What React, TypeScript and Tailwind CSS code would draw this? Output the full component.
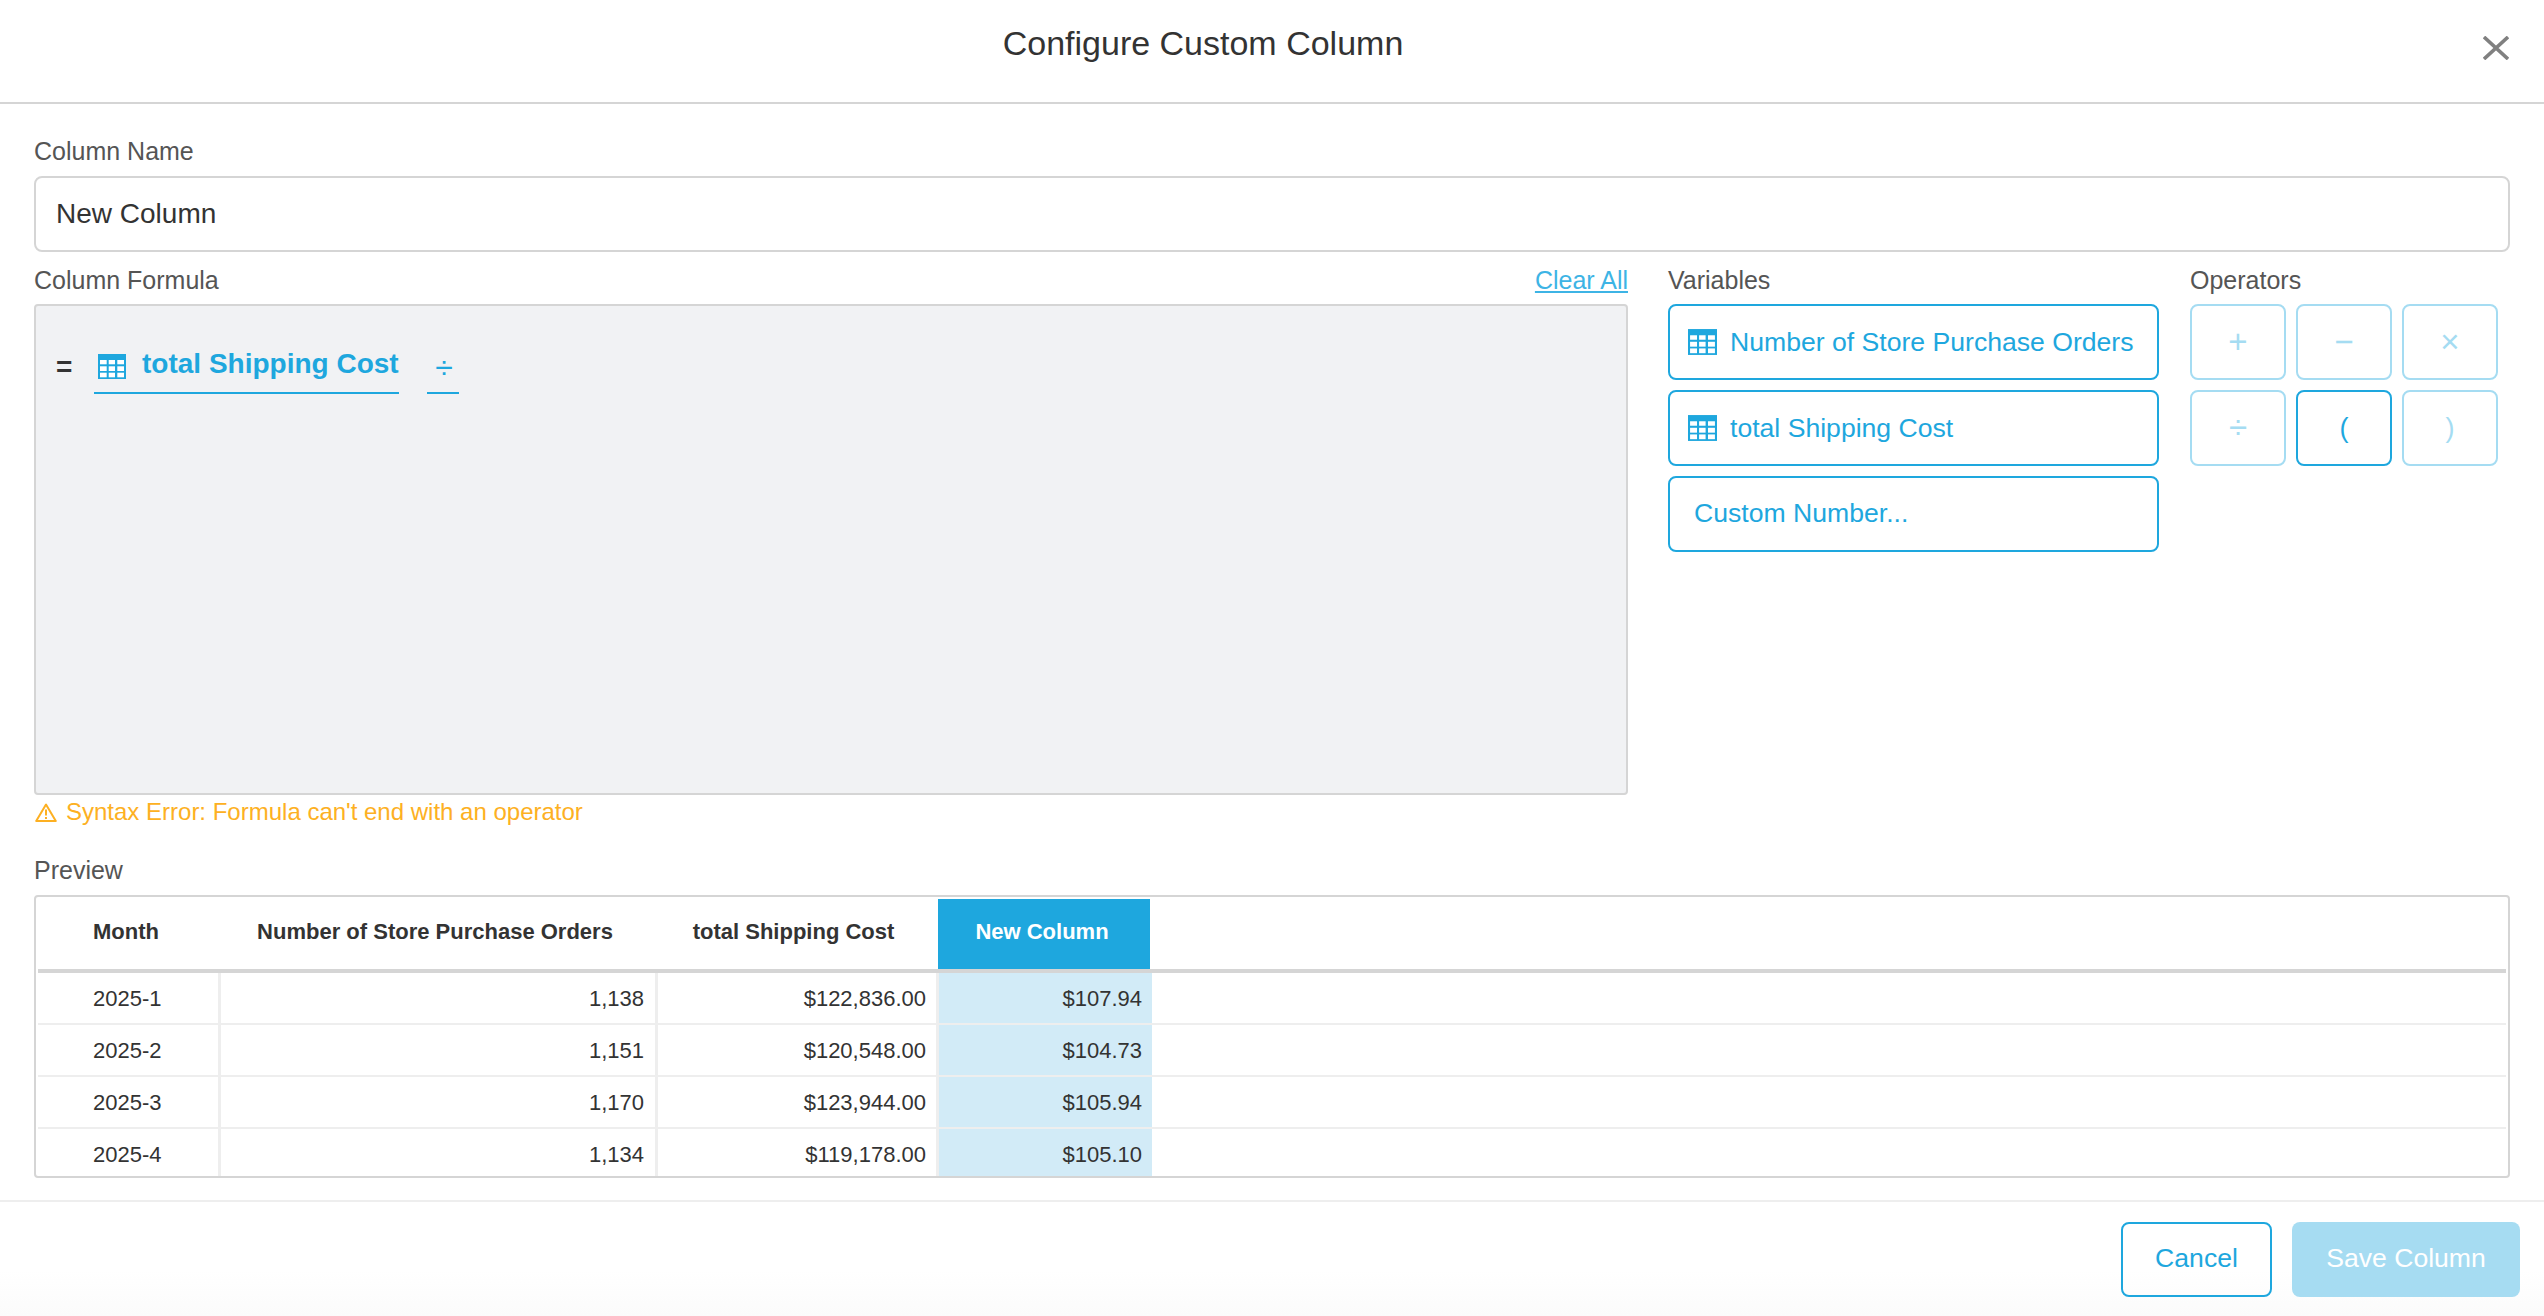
import { ReactNode } from 'react';

const rows = [
  ['2025-1', '1,138', '$122,836.00', '$107.94'],
  ['2025-2', '1,151', '$120,548.00', '$104.73'],
  ['2025-3', '1,170', '$123,944.00', '$105.94'],
  ['2025-4', '1,134', '$119,178.00', '$105.10'],
];

const cellX = [2, 10.7, 19.3];
const cellW = [6.7, 6.3, 6.7];
const cellY = [6, 12.3, 18.7];
const cellH = [4.3, 4.7, 4.6];

function TableIcon({ className }: { className: string }) {
  return (
    <svg viewBox="0 0 28 25" className={className}>
      <rect width="28" height="25" fill="currentColor" />
      {cellY.map((y, i) =>
        cellX.map((x, j) => <rect key={`${i}-${j}`} x={x} y={y} width={cellW[j]} height={cellH[i]} fill="#fff" />),
      )}
    </svg>
  );
}

function OpButton({ children, active, small }: { children: ReactNode; active?: boolean; small?: boolean }) {
  return (
    <button
      className={
        (active ? 'border-[#1ea7de] text-[#1ea7de] ' : 'border-[#a5dcf2] text-[#a5dcf2] ') +
        (small ? 'text-[27px] ' : 'text-[33px] ') +
        'h-[76px] w-[96px] rounded-lg border-2'
      }
    >
      {children}
    </button>
  );
}

export default function App() {
  return (
    <div className="flex h-[1316px] w-full flex-col overflow-hidden bg-white font-['Liberation_Sans',Arial,sans-serif] text-[#333]">
      <div className="flex h-[104px] items-start border-b-2 border-[#d5d5d5]">
        <h1 className="flex-1 pt-[21px] text-center text-[34px] leading-[44px] font-normal">Configure Custom Column</h1>
        <div className="flex w-[138px] pt-[36px] pl-[77px]">
          <svg viewBox="0 0 26 24" className="h-[24px] w-[26px]" stroke="#808080" strokeWidth="3.6" fill="none">
            <path d="M1 1l24 22M25 1L1 23" />
          </svg>
        </div>
      </div>

      <div className="flex-1 px-[34px]">
        <div className="pt-[30px] text-[25px] leading-[34px] text-[#555]">Column Name</div>
        <div className="mt-[8px] flex h-[76px] items-center rounded-lg border-2 border-[#d5d5d5] px-[20px] text-[28px]">New Column</div>

        <div className="mt-[10px] flex gap-[40px]">
          <div className="w-[1594px]">
            <div className="mb-[4px] flex h-[38px] items-center justify-between text-[25px] text-[#555]">
              <span>Column Formula</span>
              <a className="text-[#3db4e5] underline">Clear All</a>
            </div>
            <div className="flex h-[491px] items-start rounded-sm border-2 border-[#d5d5d5] bg-[#f1f2f4] pt-[48px] pl-[20px]">
              <span className="w-[38px] text-[28px] leading-[26px] font-bold">=</span>
              <div className="flex h-[40px] w-[305px] items-start gap-[16px] border-b-2 border-[#1ea7de] pl-[4px] font-bold whitespace-nowrap text-[#1ea7de]">
                <TableIcon className="h-[25px] w-[28px] shrink-0" />
                <span className="text-[28px] leading-[20px]">total Shipping Cost</span>
              </div>
              <div className="ml-[28px] flex h-[40px] w-[32px] justify-center pl-[2px] border-b-2 border-[#1ea7de] text-[32px] leading-[26px] text-[#1ea7de]">÷</div>
            </div>
            <div className="flex h-[34px] items-center gap-[9px] pl-[1px] text-[24px] text-[#fdb022]">
              <svg viewBox="0 0 22 19" className="h-[19px] w-[22px]" fill="none" stroke="currentColor" strokeWidth="2">
                <path d="M11 1.5L1.2 18h19.6z" strokeLinejoin="round" />
                <path d="M11 6.5v6M11 14v2" />
              </svg>
              <span>Syntax Error: Formula can't end with an operator</span>
            </div>
          </div>

          <div className="w-[491px]">
            <div className="mb-[4px] flex h-[38px] items-center text-[25px] text-[#555]">Variables</div>
            <div className="flex flex-col gap-[10px] text-[26.6px] text-[#1ea7de]">
              <button className="flex h-[76px] items-center gap-[13px] rounded-lg border-2 border-[#1ea7de] pt-[2px] pl-[18px]">
                <TableIcon className="-mt-[2px] h-[26px] w-[29px] shrink-0" />
                Number of Store Purchase Orders
              </button>
              <button className="flex h-[76px] items-center gap-[13px] rounded-lg border-2 border-[#1ea7de] pt-[2px] pl-[18px]">
                <TableIcon className="-mt-[2px] h-[26px] w-[29px] shrink-0" />
                total Shipping Cost
              </button>
              <button className="flex h-[76px] items-center rounded-lg border-2 border-[#1ea7de] pl-[24px]">Custom Number...</button>
            </div>
          </div>

          <div className="-ml-[9px] w-[308px]">
            <div className="mb-[4px] flex h-[38px] items-center text-[25px] text-[#555]">Operators</div>
            <div className="grid grid-cols-[96px_96px_96px] gap-x-[10px] gap-y-[10px]">
              <OpButton>+</OpButton>
              <OpButton>−</OpButton>
              <OpButton>×</OpButton>
              <OpButton>÷</OpButton>
              <OpButton active small>(</OpButton>
              <OpButton small>)</OpButton>
            </div>
          </div>
        </div>

        <div className="mt-[24px] text-[25px] leading-[34px] text-[#555]">Preview</div>
        <div className="mt-[8px] h-[283px] overflow-hidden rounded-sm border-2 border-[#d5d5d5] p-[2px] text-[22px]">
          <div className="flex h-[74px] border-b-4 border-[#d5d5d5] font-bold">
            <div className="w-[180px] pt-[16px] pl-[55px]">Month</div>
            <div className="w-[434px] pt-[16px] text-center">Number of Store Purchase Orders</div>
            <div className="w-[286px] pt-[16px] pr-[3px] text-center">total Shipping Cost</div>
            <div className="w-[212px] bg-[#1ea7de] pt-[16px] pr-[4px] text-center text-white">New Column</div>
          </div>
          {rows.map((r) => (
            <div key={r[0]} className="flex h-[52px] border-b-2 border-[#eeeeee] leading-[52px]">
              <div className="w-[183px] border-r-[3px] border-[#eeeeee] pl-[55px]">{r[0]}</div>
              <div className="w-[437px] border-r-[3px] border-[#eeeeee] pr-[11px] text-right">{r[1]}</div>
              <div className="w-[281px] border-r-[3px] border-[#eeeeee] pr-[10px] text-right">{r[2]}</div>
              <div className="w-[213px] bg-[#d2ebf7] pr-[10px] text-right">{r[3]}</div>
            </div>
          ))}
        </div>
      </div>

      <div className="flex h-[116px] items-start justify-end gap-[20px] border-t-2 border-[#eeeeee] bg-linear-to-b from-white from-60% to-[#fbfbfb] pt-[20px] pr-[24px] text-[26.6px]">
        <button className="h-[75px] w-[151px] rounded-lg border-2 border-[#1ea7de] pb-[2px] text-[#1ea7de]">Cancel</button>
        <button className="h-[75px] w-[228px] rounded-lg bg-[#a6dcf2] pb-[2px] text-white">Save Column</button>
      </div>
    </div>
  );
}
